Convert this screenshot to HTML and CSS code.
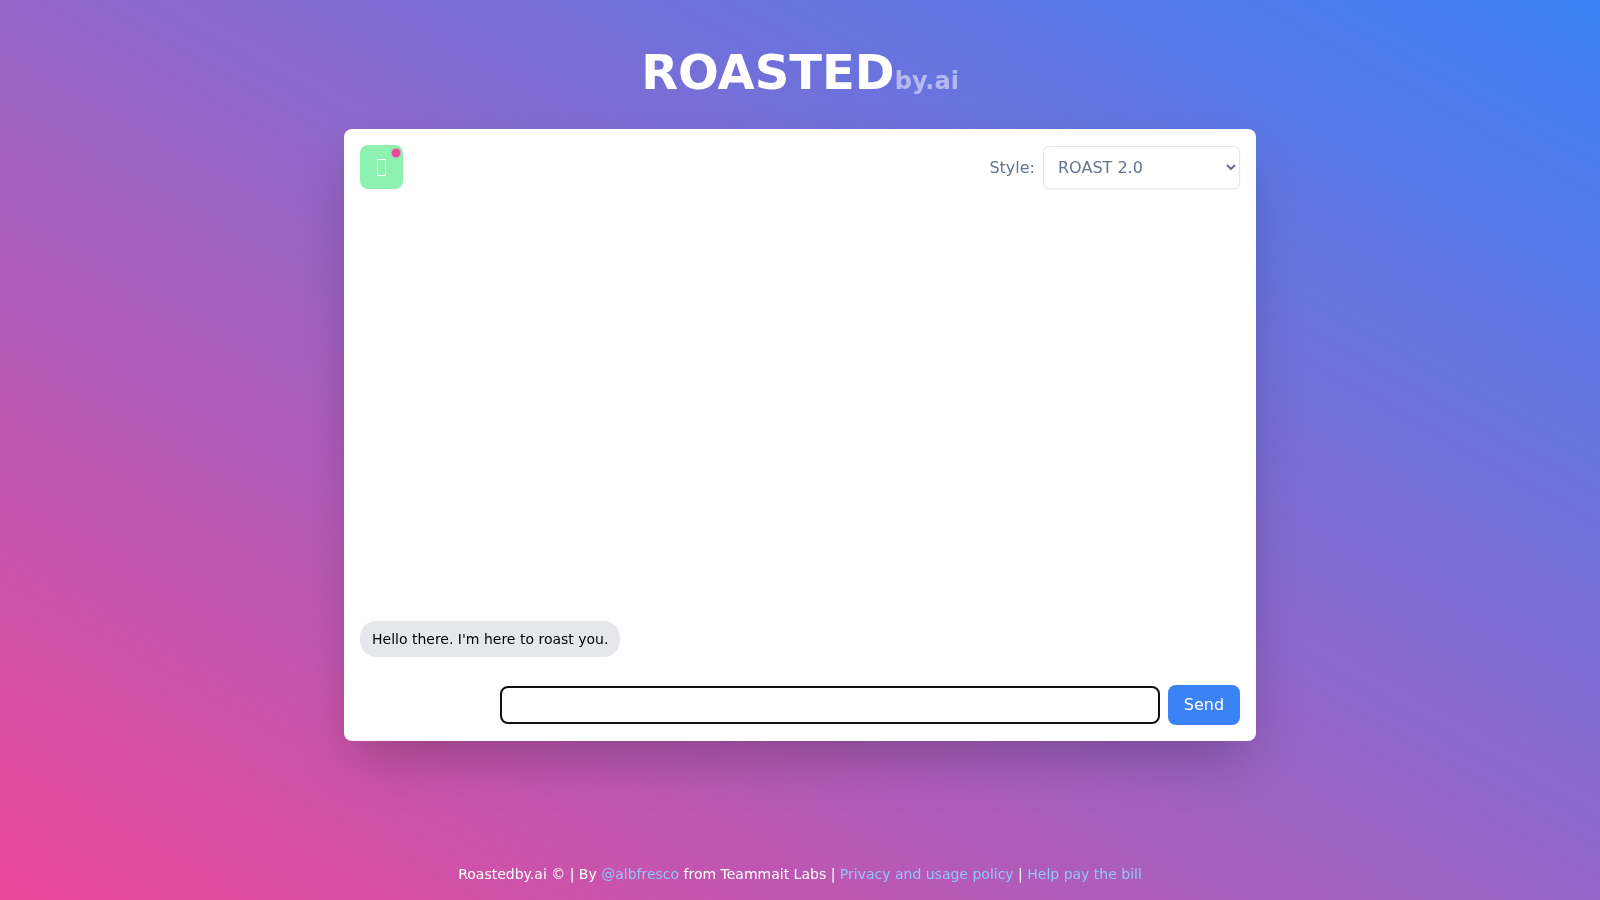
FILE: index.html
```html
<!DOCTYPE html>
<html lang="en">
<head>
  <meta charset="UTF-8">
  <meta name="viewport" content="width=device-width, initial-scale=1.0">
  <title>Roastedby.ai</title>
  <link rel="stylesheet" href="styles.css">
</head>
<body>
  <h1 class="title">ROASTED<span class="title-sub">by.ai</span></h1>

  <main class="card">
    <div class="card-top">
      <div class="avatar">
        <span class="avatar-glyph"></span>
        <span class="avatar-dot"></span>
      </div>
      <div class="style-picker">
        <label for="styleSelect">Style:</label>
        <select id="styleSelect">
          <option>ROAST 2.0</option>
        </select>
      </div>
    </div>

    <div class="messages">
      <p class="bubble">Hello there. I'm here to roast you.</p>
    </div>

    <form class="send-row">
      <input type="text" class="send-input">
      <button type="button" class="send-button">Send</button>
    </form>
  </main>

  <footer class="footer">
    Roastedby.ai © | By <a href="#">@albfresco</a> from Teammait Labs | <a href="#">Privacy and usage policy</a> | <a href="#">Help pay the bill</a>
  </footer>
</body>
</html>
```

FILE: styles.css
```css
* {
  box-sizing: border-box;
}
body {
  margin: 0;
  height: 900px;
  display: flex;
  flex-direction: column;
  align-items: center;
  font-family: "DejaVu Sans", sans-serif;
  background: linear-gradient(to top right, #ec4899, #3b82f6);
  color: white;
  overflow: hidden;
}
.title {
  width: 100%;
  margin: 0;
  padding-top: 44px;
  height: 129px;
  font-size: 48px;
  line-height: 56px;
  font-weight: 700;
  text-align: center;
  will-change: transform;
}
.title-sub {
  font-size: 24px;
  opacity: 0.5;
}
.card {
  width: 912px;
  height: 612px;
  padding: 16px;
  display: flex;
  flex-direction: column;
  background: white;
  border-radius: 8px;
  box-shadow: 0 25px 50px -12px rgba(0, 0, 0, 0.25);
  will-change: transform;
}
.card-top {
  display: flex;
  justify-content: space-between;
  align-items: center;
}
.avatar {
  position: relative;
  width: 43px;
  height: 44px;
  display: flex;
  align-items: center;
  justify-content: center;
  background: #8df1b1;
  border-radius: 8px;
}
.avatar-glyph {
  width: 9px;
  height: 17px;
  border: 1px solid white;
}
.avatar-dot {
  position: absolute;
  top: 3px;
  right: 2px;
  width: 10px;
  height: 10px;
  background: #ec4899;
  border: 1px solid rgba(200, 200, 200, 0.6);
  border-radius: 50%;
}
.style-picker {
  display: flex;
  align-items: center;
  gap: 8px;
  color: #64748b;
  font-size: 16px;
}
.style-picker select {
  width: 197px;
  height: 43px;
  padding: 0 10px;
  font-family: inherit;
  font-size: 16px;
  color: #64748b;
  background: white;
  border: 1px solid #e2e8f0;
  border-radius: 6px;
  box-shadow: 0 1px 2px rgba(0, 0, 0, 0.05);
}
.messages {
  flex: 1;
  display: flex;
  align-items: flex-end;
}
.bubble {
  margin: 0;
  padding: 8px 12px;
  font-size: 14px;
  line-height: 20px;
  color: #000;
  background: #e5e7eb;
  border-radius: 16px;
}
.send-row {
  margin-top: 28px;
  display: flex;
  justify-content: flex-end;
  align-items: center;
  gap: 8px;
}
.send-input {
  width: 660px;
  height: 38px;
  padding: 0 12px;
  border: 2px solid #101010;
  border-radius: 8px;
  outline: none;
}
.send-button {
  width: 72px;
  height: 40px;
  padding: 0 0 2px;
  font-family: inherit;
  font-size: 16px;
  color: white;
  background: #3b82f6;
  border: none;
  border-radius: 8px;
}
.footer {
  width: 100%;
  margin-top: 123px;
  font-size: 14px;
  line-height: 20px;
  text-align: center;
  will-change: transform;
}
.footer a {
  color: #93c5fd;
  text-decoration: none;
}
```
